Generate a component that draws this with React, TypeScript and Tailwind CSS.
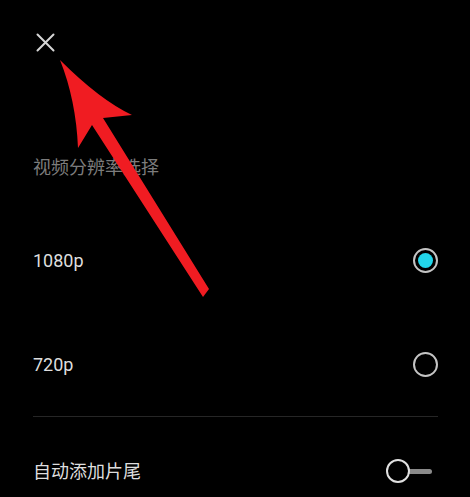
import { useState } from "react";

const FONT = { fontFamily: 'Roboto, "Noto Sans CJK SC", sans-serif' };

function Radio({ checked }: { checked: boolean }) {
  return (
    <span className="flex h-[25px] w-[25px] items-center justify-center rounded-full border-2 border-[#c4c4c4]">
      {checked && <span className="h-[15px] w-[15px] rounded-full bg-[#22d6ea]" />}
    </span>
  );
}

export default function App() {
  const [res, setRes] = useState("1080p");
  const [tail, setTail] = useState(false);

  return (
    <div className="relative h-[497px] w-full overflow-hidden bg-black" style={FONT}>
      <div className="pl-[36px] pt-[33px]">
        <button className="block h-[19px] w-[19px]">
          <svg viewBox="0 0 19 19" width="19" height="19" stroke="#d6d6d6" strokeWidth="2" strokeLinecap="round">
            <path d="M1.5 1.5 17.5 17.5M17.5 1.5 1.5 17.5" />
          </svg>
        </button>
      </div>

      <div className="pl-[33px] pr-[32px]">
        <div className="mt-[104px] text-[18px] leading-[24px] text-[#7c7c7c]">视频分辨率选择</div>

        <div className="mt-[28px]">
          {["1080p", "720p"].map((r) => (
            <div
              key={r}
              className="flex h-[104px] items-center justify-between"
              onClick={() => setRes(r)}
            >
              <span className="text-[18px] text-[#dedede]">{r}</span>
              <Radio checked={res === r} />
            </div>
          ))}
        </div>

        <div className="h-px bg-[#262626]" />

        <div className="flex h-[108px] items-center justify-between">
          <span className="text-[18px] text-[#dedede]">自动添加片尾</span>
          <button className="relative mr-[6px] flex h-[24px] w-[46px] items-center" onClick={() => setTail(!tail)}>
            <span className="absolute left-[12px] right-0 h-[5px] rounded-full bg-[#8a8a8a]" />
            <span className="relative h-[24px] w-[24px] rounded-full border-2 border-[#e0e0e0] bg-black" />
          </button>
        </div>
      </div>

      {/* red annotation arrow pointing at the close button */}
      <svg className="pointer-events-none absolute left-0 top-0" width="470" height="497" viewBox="0 0 470 497">
        <path
          d="M60 60 Q100 100 132 115 L103 118 L209 289 L203 297 L92 125 L78 148 Q76 100 60 60 Z"
          fill="#f01c22"
        />
      </svg>
    </div>
  );
}
